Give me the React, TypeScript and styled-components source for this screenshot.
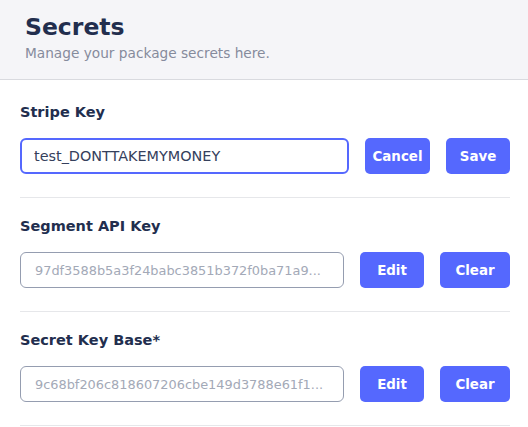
import React from "react";
import styled, { createGlobalStyle } from "styled-components";

const GlobalStyle = createGlobalStyle`
  html, body {
    margin: 0;
    padding: 0;
    background: #ffffff;
    font-family: "DejaVu Sans", "Noto Sans", sans-serif;
  }
  * { box-sizing: border-box; }
`;

const Page = styled.div`
  width: 528px;
  display: flex;
  flex-direction: column;
`;

const Header = styled.header`
  background: #f5f5f8;
  border-bottom: 1px solid #d9dadf;
  padding: 13px 25px 17px;
  display: flex;
  flex-direction: column;
  gap: 3px;
`;

const Title = styled.h1`
  margin: 0;
  font-size: 23.5px;
  line-height: 28px;
  font-weight: 700;
  color: #222e4e;
`;

const Subtitle = styled.p`
  margin: 0;
  font-size: 13.7px;
  line-height: 18px;
  color: #868b9c;
`;

const List = styled.div`
  display: flex;
  flex-direction: column;
  padding: 4px 18px 0 20px;
`;

const Section = styled.section`
  display: flex;
  flex-direction: column;
  gap: 16px;
  padding: 18px 0 23px;
  border-bottom: 1px solid #e6e7ea;
`;

const Label = styled.label`
  font-size: 14.5px;
  line-height: 20px;
  font-weight: 700;
  color: #222e4e;
`;

const Row = styled.div`
  display: flex;
  align-items: center;
  gap: 16px;
`;

const Field = styled.input<{ $active?: boolean }>`
  flex: 1;
  min-width: 0;
  height: 36px;
  border-radius: 6px;
  border: ${(p) => (p.$active ? "2px solid #5568fe" : "1px solid #959db0")};
  padding: ${(p) => (p.$active ? "0 12px" : "0 14px")};
  font-family: "DejaVu Sans", "Noto Sans", sans-serif;
  font-size: ${(p) => (p.$active ? "14.4px" : "12.9px")};
  color: ${(p) => (p.$active ? "#35405c" : "#a3a9b7")};
  background: #ffffff;
  outline: none;
  text-overflow: ellipsis;
`;

const Button = styled.button<{ $w: number }>`
  flex: none;
  width: ${(p) => p.$w}px;
  height: 36px;
  border: none;
  border-radius: 5px;
  background: #5568fe;
  color: #ffffff;
  font-family: "DejaVu Sans", "Noto Sans", sans-serif;
  font-size: 13.4px;
  font-weight: 700;
  padding: 0;
  cursor: pointer;
`;

type Secret = {
  label: string;
  value: string;
  editing: boolean;
};

const secrets: Secret[] = [
  { label: "Stripe Key", value: "test_DONTTAKEMYMONEY", editing: true },
  { label: "Segment API Key", value: "97df3588b5a3f24babc3851b372f0ba71a9...", editing: false },
  { label: "Secret Key Base*", value: "9c68bf206c818607206cbe149d3788e61f1...", editing: false },
];

export default function App() {
  return (
    <Page>
      <GlobalStyle />
      <Header>
        <Title>Secrets</Title>
        <Subtitle>Manage your package secrets here.</Subtitle>
      </Header>
      <List>
        {secrets.map((s) => (
          <Section key={s.label}>
            <Label>{s.label}</Label>
            <Row>
              <Field $active={s.editing} readOnly value={s.value} />
              {s.editing ? (
                <>
                  <Button $w={65}>Cancel</Button>
                  <Button $w={64}>Save</Button>
                </>
              ) : (
                <>
                  <Button $w={64}>Edit</Button>
                  <Button $w={70}>Clear</Button>
                </>
              )}
            </Row>
          </Section>
        ))}
      </List>
    </Page>
  );
}
